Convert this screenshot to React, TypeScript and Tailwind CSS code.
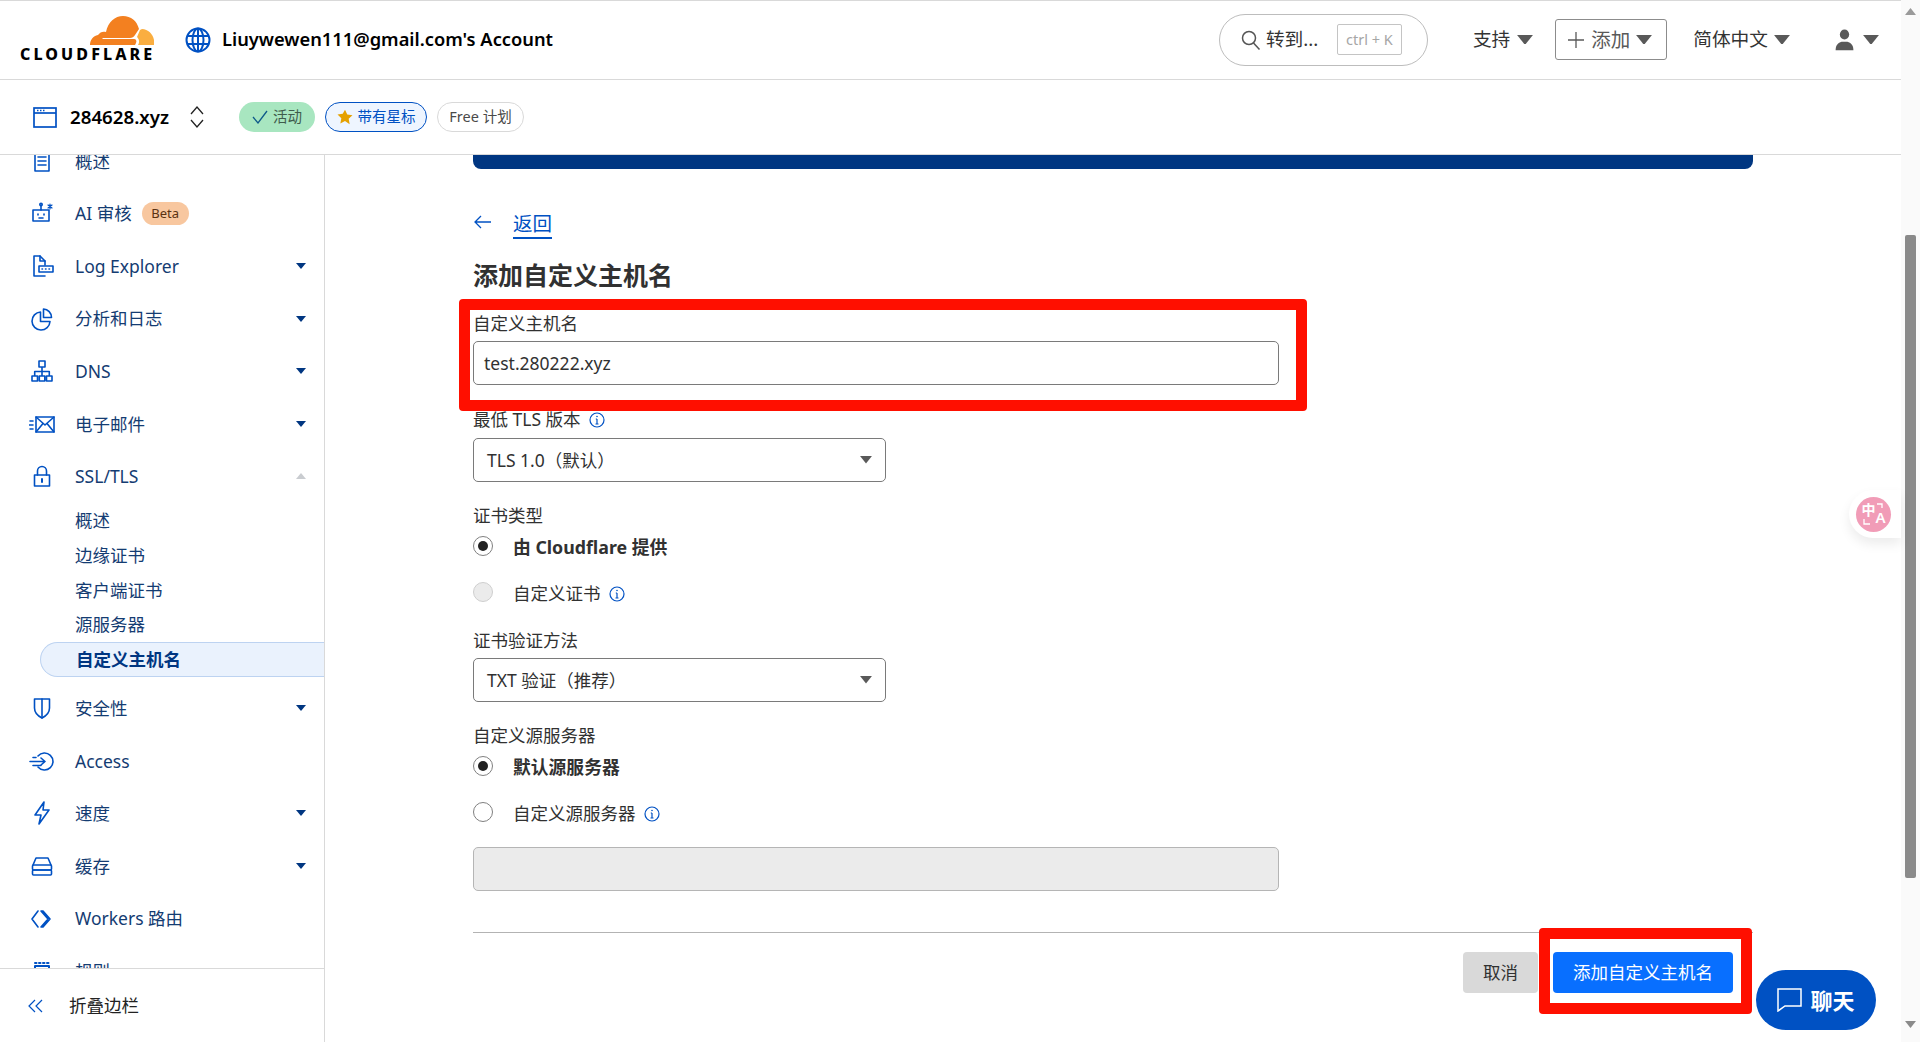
import React from "react";

const ic = { fill: "none", stroke: "#0051c3", strokeWidth: 1.6, strokeLinecap: "round", strokeLinejoin: "round" } as const;
const Svg = ({ children, w = 24, h = 24 }: { children: React.ReactNode; w?: number; h?: number }) => (
  <svg width={w} height={h} viewBox={`0 0 ${w} ${h}`} {...ic}>{children}</svg>
);

const icons: Record<string, React.ReactNode> = {
  doc: <Svg><path d="M5 3h14v19H5z" /><path d="M8 8h8M8 12h8M8 16h8" /></Svg>,
  ai: <Svg><path d="M3 9h16v11H3z" /><path d="M11 4v5" /><circle cx="11" cy="3.5" r="1.2" /><path d="M8 13v1M14 13v1M9 17h4" /><path d="M20 3v5M18 4l4 3M22 4l-4 3" strokeWidth="1.2" /></Svg>,
  log: <Svg><path d="M15 11V7l-5-5H4v20h11" /><path d="M10 2v5h5" /><path d="M9 12h14v6H9z" /><path d="M12 15h.5M15.5 15h.5M19 15h.5" /></Svg>,
  chart: <Svg><path d="M10.5 5a9 9 0 1 0 9.5 9.500H10.500z" /><path d="M13.500 2a8.500 8.500 0 0 1 8 8.500h-8z" /></Svg>,
  dns: <Svg><path d="M9 2h6v6H9zM2 17h5.500v5H2zM9.300 17h5.500v5H9.300zM16.500 17H22v5h-5.500zM12 8v9M4.700 17v-4.500h14.600V17" /></Svg>,
  mail: <Svg w={26} h={24}><path d="M7 5h18v15H7z" /><path d="M7 5l9 8 9-8M7 20l7-8.500M25 20l-7-8.500" /><path d="M1 9h3M0 13h4M1 17h3" /></Svg>,
  lock: <Svg><path d="M4.500 11h15v11h-15z" /><path d="M7.500 11V7a4.500 4.500 0 0 1 9 0v4" /><path d="M12 15v3" strokeWidth="2" /></Svg>,
  shield: <Svg><path d="M4.500 3h15v9c0 5-3.500 8-7.500 10-4-2-7.500-5-7.500-10z" /><path d="M12 3v19" /></Svg>,
  access: <Svg w={26} h={24}><path d="M9 7a8.500 8.500 0 1 1 0 11" /><path d="M1 12.500h15M12 9l4 3.500-4 3.500M4 16.500h8M4 8.500h3" /></Svg>,
  bolt: <Svg><path d="M14 1L5 14h6l-2 9 10-14h-6z" /></Svg>,
  cache: <Svg><path d="M3 11l3-7h12l3 7" /><rect x="2.500" y="11" width="19" height="5" rx="1" /><rect x="2.500" y="16" width="19" height="5" rx="1" /></Svg>,
  routes: <Svg><path d="M8 4l-6 8 6 8M11 4h2l7 8-7 8h-2l7-8z" /></Svg>,
  rules: <Svg><path d="M5 4h1.500M9 4h1.500M13 4h1.500M17 4h1.500M5 7h14v16H5z" strokeWidth="2" /></Svg>,
};

const Caret = ({ up, c = "#003681" }: { up?: boolean; c?: string }) => (
  <svg width="10" height="6" viewBox="0 0 10 6" className="ml-auto mr-[18px]">
    <path d={up ? "M0 6L5 0l5 6z" : "M0 0h10L5 6z"} fill={c} />
  </svg>
);

const GrayCaret = ({ w = 16 }: { w?: number }) => (
  <svg width={w} height={w * 0.62} viewBox="0 0 16 10"><path d="M0 0h16L8 10z" fill="#595959" /></svg>
);

const NavRow = ({ icon, label, caret, up, children }: { icon: string; label: string; caret?: boolean; up?: boolean; children?: React.ReactNode }) => (
  <div className="flex h-[52.6px] shrink-0 items-center text-[#143c72]">
    <div className="flex w-[75px] shrink-0 justify-center pl-[16px] pr-[8px]">{icons[icon]}</div>
    <span>{label}</span>
    {children}
    {caret && (up ? <Caret up c="#c9ccd0" /> : <Caret />)}
  </div>
);

const Sub = ({ label }: { label: string }) => (
  <div className="flex h-[34.800px] items-center pl-[75px] text-[#143c72]">{label}</div>
);

const Info = () => (
  <svg width="16" height="16" viewBox="0 0 16 16" className="ml-[8px] mt-[2px]" fill="none" stroke="#0051c3">
    <circle cx="8" cy="8" r="7" strokeWidth="1.200" />
    <path d="M8 7v5M6.500 12h3M6.800 7H8" strokeWidth="1.200" />
    <circle cx="8" cy="4.500" r="0.800" fill="#0051c3" stroke="none" />
  </svg>
);

const Radio = ({ on, disabled, label, bold, info, mt }: { on?: boolean; disabled?: boolean; label: string; bold?: boolean; info?: boolean; mt: string }) => (
  <div className={`flex h-[24px] items-center ${mt}`}>
    <span className={`mb-[2px] mr-[20px] flex h-[20px] w-[20px] items-center justify-center rounded-full border ${disabled ? "border-[#cfcfcf] bg-[#ebebeb]" : "border-[#808080] bg-white"}`}>
      {on && <span className="h-[10px] w-[10px] rounded-full bg-[#222]" />}
    </span>
    <span className={`mt-[1px] ${bold ? "text-[17.800px] font-bold text-[#313131]" : "text-[#313131]"}`}>{label}</span>
    {info && <Info />}
  </div>
);

const Select = ({ label, mt }: { label: string; mt: string }) => (
  <div className={`flex h-[44px] w-[413px] items-center justify-between rounded-[5px] border border-[#7a7a7a] bg-white pl-[13px] pr-[13px] text-[#313131] ${mt}`}>
    <span>{label}</span>
    <GrayCaret w={12} />
  </div>
);

export default function App() {
  return (
    <div className="relative flex h-[1042px] w-[1920px] overflow-hidden bg-white text-[17.500px] font-['Noto_Sans','Noto_Sans_CJK_SC',sans-serif]">
      <div className="flex h-full w-[1901px] flex-col">
        <header className="flex h-[80px] shrink-0 items-center border-b border-t border-[#d9d9d9] pb-[1px]">
          <div className="ml-[20px] -mt-[1px] flex w-[134px] flex-col items-end">
            <svg width="64" height="29" viewBox="0 0 64 29">
              <path d="M0 29C0 24 3 20 8 19c2-3 5-4 8-3C18 6 25 0 33 0c8 0 14 5 16 13l-4 6c-1 2-3 3-5 3H13c-1 0-1 1 0 1h31c2 0 3 2 2 4l-1 2z" fill="#f38020" />
              <path d="M52 13c6 0 11 5 12 11v5H48c2-3 1-6-1-8l3-7z" fill="#faae40" />
            </svg>
            <span className="mt-[2px] w-[134px] whitespace-nowrap text-[16px] font-extrabold leading-[15px] tracking-[3.100px] text-black">CLOUDFLARE</span>
          </div>
          <svg width="26" height="26" viewBox="0 0 26 26" className="ml-[31px]" fill="none" stroke="#0051c3" strokeWidth="2">
            <circle cx="13" cy="13" r="11.500" />
            <ellipse cx="13" cy="13" rx="5.500" ry="11.500" />
            <path d="M13 1.500v23M2 9h22M2 17h22" />
          </svg>
          <span className="ml-[11px] -mt-[2px] whitespace-nowrap text-[18.300px] font-semibold text-black">Liuywewen111@gmail.com's Account</span>
          <div className="ml-auto flex h-[52px] w-[209px] items-center rounded-full border border-[#bdbdbd] pl-[20px]">
            <svg width="22" height="22" viewBox="0 0 22 22" fill="none" stroke="#555" strokeWidth="1.500"><circle cx="9" cy="9" r="6.500" /><path d="M13.500 14l6 6.500" /></svg>
            <span className="ml-[4px] w-[71px] text-[18.700px] text-[#333]">转到...</span>
            <span className="flex h-[31px] w-[65px] items-center justify-center rounded-[2px] border border-[#c4c4c4] text-[14.500px] text-[#a6a6a6]">ctrl + K</span>
          </div>
          <span className="ml-[45px] text-[18.700px] text-[#333]">支持</span>
          <span className="ml-[7px]"><GrayCaret /></span>
          <div className="ml-[22px] flex h-[41px] w-[112px] items-center rounded-[3px] border border-[#8c8c8c] pl-[12px]">
            <svg width="16" height="16" viewBox="0 0 16 16" stroke="#595959" strokeWidth="1.300"><path d="M8 0v16M0 8h16" /></svg>
            <span className="ml-[7px] text-[19.500px] text-[#595959]">添加</span>
            <span className="ml-[6px]"><GrayCaret /></span>
          </div>
          <span className="ml-[26px] text-[18.700px] text-[#333]">简体中文</span>
          <span className="ml-[6px]"><GrayCaret /></span>
          <svg width="21" height="22" viewBox="0 0 21 26" className="ml-[44px]" fill="#595959"><ellipse cx="10.500" cy="6.500" rx="5.500" ry="6" /><path d="M0 25c0-6 3-9 7-10h7c4 1 7 4 7 10z" /></svg>
          <span className="ml-[8px] mr-[22px]"><GrayCaret /></span>
        </header>

        <div className="flex h-[75px] shrink-0 items-center border-b border-[#d9d9d9]">
          <svg width="24" height="21" viewBox="0 0 24 21" className="ml-[33px]" fill="none" stroke="#0051c3" strokeWidth="1.700">
            <rect x="1" y="1" width="22" height="19" /><path d="M1 6h22" /><path d="M4 3.500h1.500M7 3.500h1.500M10 3.500h1.500" />
          </svg>
          <span className="ml-[13px] w-[99px] text-[18.700px] font-semibold text-black">284628.xyz</span>
          <svg width="16" height="24" viewBox="0 0 16 24" className="ml-[20px]" fill="none" stroke="#222" strokeWidth="1.300"><path d="M2 9l6-7 6 7M2 15l6 7 6-7" /></svg>
          <span className="ml-[34px] flex h-[30px] w-[76px] items-center justify-center rounded-full bg-[#a8e6c0] text-[14.500px] text-[#3f5c4c]">
            <svg width="16" height="14" viewBox="0 0 16 14" fill="none" stroke="#0f5a8a" strokeWidth="1.300" className="mr-[5px]"><path d="M1 7l5 6 9-12" /></svg>活动
          </span>
          <span className="ml-[10px] flex h-[30px] w-[102px] items-center justify-center rounded-full border border-[#0051c3] bg-[#eef5ff] text-[14.500px] text-[#0051c3]">
            <svg width="16" height="16" viewBox="0 0 24 24" fill="#e5a100" className="mr-[5px]"><path d="M12 1l3.400 7.300 7.800 1-5.700 5.500 1.500 7.900L12 18l-7 3.700 1.500-7.900L.8 8.300l7.800-1z" /></svg>带有星标
          </span>
          <span className="ml-[10px] flex h-[30px] w-[87px] items-center justify-center rounded-full border border-[#d9d9d9] text-[14.500px] text-[#4a4a4a]">Free 计划</span>
        </div>

        <div className="flex min-h-0 flex-1">
          <aside className="flex w-[325px] shrink-0 flex-col border-r border-[#d9d9d9]">
            <div className="min-h-0 flex-1 overflow-hidden">
              <div className="-mt-[20.500px]">
                <NavRow icon="doc" label="概述" />
                <NavRow icon="ai" label="AI 审核">
                  <span className="ml-[10px] flex h-[23px] w-[47px] items-center justify-center rounded-full bg-[#f8c79f] text-[13px] text-[#5a3212]">Beta</span>
                </NavRow>
                <NavRow icon="log" label="Log Explorer" caret />
                <NavRow icon="chart" label="分析和日志" caret />
                <NavRow icon="dns" label="DNS" caret />
                <NavRow icon="mail" label="电子邮件" caret />
                <NavRow icon="lock" label="SSL/TLS" caret up />
                <Sub label="概述" />
                <Sub label="边缘证书" />
                <Sub label="客户端证书" />
                <Sub label="源服务器" />
                <div className="ml-[40px] flex h-[35px] items-center rounded-l-full border border-r-0 border-[#bdd3f1] bg-[#eaf2fd] pl-[35px] font-bold text-[#003681]">自定义主机名</div>
                <div className="h-[5px]" />
                <NavRow icon="shield" label="安全性" caret />
                <NavRow icon="access" label="Access" />
                <NavRow icon="bolt" label="速度" caret />
                <NavRow icon="cache" label="缓存" caret />
                <NavRow icon="routes" label="Workers 路由" />
                <NavRow icon="rules" label="规则" />
              </div>
            </div>
            <div className="flex h-[74px] shrink-0 items-center border-t border-[#d9d9d9] pl-[28px]">
              <svg width="15" height="14" viewBox="0 0 15 14" fill="none" stroke="#0051c3" strokeWidth="1.200"><path d="M7 1L1 7l6 6M14 1L8 7l6 6" /></svg>
              <span className="ml-[26px] text-[#222]">折叠边栏</span>
            </div>
          </aside>

          <main className="min-w-0 flex-1 pl-[148px]">
            <div className="h-[14px] w-[1280px] rounded-b-lg bg-[#003681]" />
            <div className="mt-[41px] flex h-[28px] items-center">
              <svg width="18" height="14" viewBox="0 0 18 14" fill="none" stroke="#0051c3" strokeWidth="1.300" className="ml-[1px] mb-[5px]"><path d="M7 1L1 7l6 6M1 7h16" /></svg>
              <a className="ml-[21px] border-b-2 border-[#0051c3] text-[19.500px] leading-[27px] text-[#0051c3]">返回</a>
            </div>
            <h1 className="mt-[21px] h-[32px] text-[25px] font-bold leading-[32px] text-[#313131]">添加自定义主机名</h1>
            <div className="mt-[21px] h-[24px] leading-[22px] text-[#313131]">自定义主机名</div>
            <div className="mt-[5px] flex h-[44px] w-[806px] items-center rounded-[5px] border border-[#7a7a7a] pl-[10px] text-[#313131]">test.280222.xyz</div>
            <div className="mt-[22px] flex h-[24px] items-center text-[#313131]">最低 TLS 版本<Info /></div>
            <Select label="TLS 1.0（默认）" mt="mt-[7px]" />
            <div className="mt-[22px] h-[24px] leading-[22px] text-[#313131]">证书类型</div>
            <Radio on bold label="由 Cloudflare 提供" mt="mt-[7px]" />
            <Radio disabled info label="自定义证书" mt="mt-[22px]" />
            <div className="mt-[24px] h-[24px] leading-[22px] text-[#313131]">证书验证方法</div>
            <Select label="TXT 验证（推荐）" mt="mt-[5px]" />
            <div className="mt-[22px] h-[24px] leading-[22px] text-[#313131]">自定义源服务器</div>
            <Radio on bold label="默认源服务器" mt="mt-[7px]" />
            <Radio info label="自定义源服务器" mt="mt-[22px]" />
            <div className="mt-[22px] h-[44px] w-[806px] rounded-[5px] border border-[#b5b5b5] bg-[#ebebeb]" />
            <div className="mt-[41px] h-px w-[1280px] bg-[#b3b3b3]" />
            <div className="mt-[19px] flex w-[1260px] justify-end gap-[15px]">
              <button className="h-[41px] w-[75px] rounded-[4px] bg-[#d9d9d9] text-[#313131]">取消</button>
              <button className="h-[41px] w-[180px] rounded-[4px] bg-[#086fff] text-white">添加自定义主机名</button>
            </div>
          </main>
        </div>
      </div>

      <div className="flex h-full w-[19px] shrink-0 flex-col items-center bg-[#fafafa] pt-[8px]">
        <svg width="11" height="7" viewBox="0 0 11 7"><path d="M0 7L5.500 0 11 7z" fill="#9a9a9a" /></svg>
        <div className="mt-[220px] h-[643px] w-[11px] rounded-[2px] bg-[#8a8a8a]" />
        <svg width="11" height="7" viewBox="0 0 11 7" className="mt-[143px]"><path d="M0 0h11L5.500 7z" fill="#8a8a8a" /></svg>
      </div>

      {/* annotations and floating widgets */}
      <div className="absolute left-[459px] top-[299px] h-[112px] w-[848px] rounded-[4px] border-[11px] border-[#ff0f00]" />
      <div className="absolute left-[1539px] top-[928px] h-[86px] w-[213px] rounded-[4px] border-[11px] border-[#ff0f00]" />
      <button className="absolute left-[1756px] top-[970px] flex h-[60px] w-[120px] items-center justify-center rounded-full bg-[#0051c3] text-[22px] font-bold text-white">
        <svg width="25" height="24" viewBox="0 0 25 24" fill="none" stroke="white" strokeWidth="1.500" className="mr-[8px]"><path d="M1 1h23v17H8l-7 5z" /></svg>聊天
      </button>
      <div className="absolute left-[1849px] top-[490px] flex h-[48px] w-[52px] items-center rounded-l-full bg-white pl-[7px] shadow-[0_6px_12px_rgba(0,0,0,0.08)]">
        <span className="relative flex h-[35px] w-[35px] items-center justify-center rounded-full bg-[#f19cb7] text-white">
          <span className="-mt-[9px] text-[14px] font-semibold leading-none">中</span>
          <span className="mt-[7px] text-[15px] font-semibold leading-none">A</span>
          <svg width="35" height="35" viewBox="0 0 35 35" fill="none" stroke="white" strokeWidth="1.300" className="absolute left-0 top-0"><path d="M21 7h5v4M8 22v5h6" /></svg>
        </span>
      </div>
    </div>
  );
}
